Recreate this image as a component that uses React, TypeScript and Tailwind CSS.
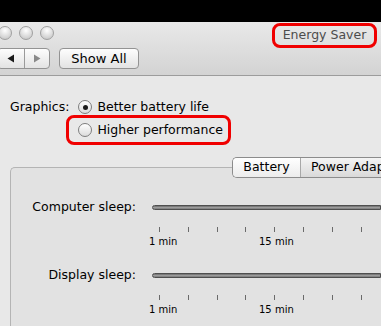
import type { ReactNode } from "react";

const font = { fontFamily: '"DejaVu Sans", "Lucida Grande", sans-serif' };

function Light() {
  return (
    <div className="h-[14px] w-[14px] shrink-0 rounded-full border border-[#a0a0a0] bg-[radial-gradient(circle_at_50%_30%,#ffffff,#d2d2d2_70%,#bdbdbd)]" />
  );
}

function Radio({ checked }: { checked?: boolean }) {
  return (
    <div className="flex h-[14px] w-[14px] shrink-0 items-center justify-center rounded-full border border-[#7d7d7d] bg-gradient-to-b from-[#ffffff] to-[#dcdcdc]">
      {checked && <div className="h-[5px] w-[5px] rounded-full bg-[#1a1a1a]" />}
    </div>
  );
}

function Slider({ label }: { label: string }) {
  const ticks = [0, 1, 2, 3, 4, 5, 6, 7, 8];
  return (
    <div className="flex flex-col">
      <div className="flex items-center">
        <div className="w-[125px] shrink-0 whitespace-nowrap text-right text-[12.5px] text-black">{label}</div>
        <div className="ml-[16px] h-[5px] flex-1 rounded-l-full border border-[#4f4f4f] bg-gradient-to-b from-[#6a6a6a] via-[#9c9c9c] to-[#7a7a7a]" />
      </div>
      <div className="ml-[148px] mt-[10px] flex h-[5px]">
        {ticks.map((t) => (
          <div key={t} className="w-[28.8px] shrink-0">
            <div className="h-[5px] w-px bg-[#6a6a6a]" />
          </div>
        ))}
      </div>
      <div className="relative mt-[4px] h-[12px] text-[10px] leading-[12px] text-black">
        <span className="absolute left-[138px]">1 min</span>
        <span className="absolute left-[248px]">15 min</span>
      </div>
    </div>
  );
}

function Tab({ children, active }: { children: ReactNode; active?: boolean }) {
  return (
    <div
      className={
        active
          ? "flex h-full w-[68px] shrink-0 items-center justify-center whitespace-nowrap border-r border-[#a8a8a8] bg-gradient-to-b from-[#ffffff] to-[#ececec]"
          : "flex h-full shrink-0 items-center whitespace-nowrap pl-[10px] pr-[20px] bg-gradient-to-b from-[#f4f4f4] to-[#d9d9d9]"
      }
    >
      {children}
    </div>
  );
}

export default function App() {
  return (
    <div className="h-[326px] w-[381px] overflow-hidden bg-[#e8e8e8] text-[12.5px]" style={font}>
      <div className="h-[22px] bg-black" />

      <div className="flex h-[54px] flex-col border-b border-[#9c9c9c] bg-gradient-to-b from-[#e9e9e9] to-[#d3d3d3]">
        <div className="flex h-[26px] items-start justify-between">
          <div className="ml-[-2px] mt-[4px] flex gap-[7px]">
            <Light />
            <Light />
            <Light />
          </div>
          <div className="mr-[4px] mt-[1px] flex h-[25px] w-[105px] items-center justify-center rounded-[8px] border-[3px] border-[#f00000] text-[12.5px] text-[#4c4c4c]">
            Energy Saver
          </div>
        </div>
        <div className="flex h-[21px] items-center gap-[9px]">
          <div className="ml-[-3px] flex h-[21px] w-[53px] rounded-[4px] border border-[#939393] bg-gradient-to-b from-[#fdfdfd] to-[#e3e3e3]">
            <div className="flex w-[27px] items-center justify-center border-r border-[#9a9a9a]">
              <svg width="8" height="9" viewBox="0 0 8 9">
                <path d="M7 0.5 L0.5 4.5 L7 8.5 Z" fill="#1a1a1a" />
              </svg>
            </div>
            <div className="flex flex-1 items-center justify-center">
              <svg width="8" height="9" viewBox="0 0 8 9">
                <path d="M1 0.5 L7.5 4.5 L1 8.5 Z" fill="#8a8a8a" />
              </svg>
            </div>
          </div>
          <div className="flex h-[21px] w-[80px] items-center justify-center rounded-[4px] border border-[#939393] bg-gradient-to-b from-[#fdfdfd] to-[#e3e3e3] text-[13px] text-black">
            Show All
          </div>
        </div>
      </div>

      <div className="flex pl-[10px] pt-[21px]">
        <div className="h-[20px] pt-[1px] leading-[18px] text-black">Graphics:</div>
        <div className="ml-[9px] flex flex-col">
          <div className="flex h-[20px] items-center gap-[5px] text-black">
            <Radio checked />
            <span>Better battery life</span>
          </div>
          <div className="-ml-[12px] -mt-[2px] flex h-[30px] w-[165px] items-center gap-[5px] rounded-[8px] border-[3px] border-[#f00000] pl-[9px] text-black">
            <Radio />
            <span className="whitespace-nowrap">Higher performance</span>
          </div>
        </div>
      </div>

      <div className="relative z-10 mt-[12px] flex h-[21px] justify-start pl-[232px]">
        <div className="flex h-[21px] shrink-0 overflow-hidden rounded-l-[5px] border border-r-0 border-[#8c8c8c] text-[12.5px] text-black">
          <Tab active>Battery</Tab>
          <Tab>Power Adapter</Tab>
        </div>
      </div>

      <div className="ml-[10px] -mt-[11px] h-[200px] rounded-tl-[5px] border-l border-t border-[#b4b4b4] bg-[#e2e2e2] pt-[30px]">
        <div className="flex flex-col gap-[18px]">
          <Slider label="Computer sleep:" />
          <Slider label="Display sleep:" />
        </div>
      </div>
    </div>
  );
}
